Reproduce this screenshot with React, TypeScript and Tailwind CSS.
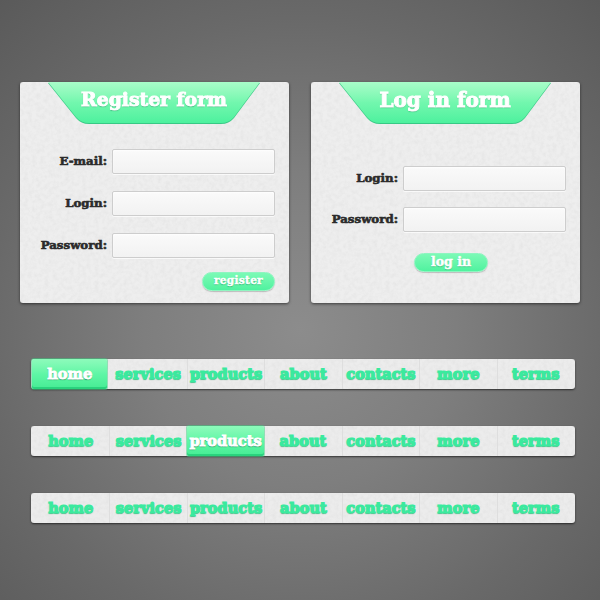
import React from "react";

const font = "[font-family:'DejaVu_Serif',serif] font-bold";

function Texture() {
  return (
    <svg className="absolute inset-0 w-full h-full pointer-events-none" aria-hidden="true">
      <filter id="grain" x="0" y="0" width="100%" height="100%">
        <feTurbulence type="fractalNoise" baseFrequency="0.24" numOctaves="3" seed="4" />
        <feColorMatrix type="matrix" values="0 0 0 0 0.6  0 0 0 0 0.6  0 0 0 0 0.6  1 0 0 0 -0.36" />
      </filter>
      <rect width="100%" height="100%" filter="url(#grain)" opacity="0.42" />
    </svg>
  );
}

function Field({ label }: { label: string }) {
  return (
    <div className="flex items-center justify-end">
      <span className={`${font} mr-[5px] text-[11.8px] leading-none text-[#2b2b2b] [-webkit-text-stroke:0.6px_#2b2b2b]`}>{label}</span>
      <input
        aria-label={label}
        className="h-[25px] w-[163px] rounded-[2px] border border-[#cdcdcd] bg-gradient-to-b from-[#fafafa] to-[#f2f2f2] shadow-[inset_0_1px_2px_rgba(255,255,255,0.9),0_1px_0_rgba(255,255,255,0.7)]"
      />
    </div>
  );
}

function Card({ title, titleSize, titlePad, children }: { title: string; titleSize: string; titlePad: string; children: React.ReactNode }) {
  return (
    <div className="relative h-[221px] w-[269px] rounded-[3px] bg-[#eeeeee] shadow-[0_1px_3px_rgba(0,0,0,0.55)]">
      <Texture />
      <div className="absolute left-[28px] top-0 [filter:drop-shadow(0_1px_0_#38c985)]">
        <div className={`flex h-[41px] w-[212px] justify-center bg-gradient-to-b from-[#a8fcc9] via-[#72f7ae] to-[#4cf19e] ${titlePad} [clip-path:path('M0_0L212_0L186_35Q181_41_173_41L41_41Q33_41_28_35Z')]`}>
          <span className={`${font} ${titleSize} leading-[29px] text-white [-webkit-text-stroke:1px_#fff] [text-shadow:0_1px_1px_rgba(40,150,100,0.8)]`}>{title}</span>
        </div>
      </div>
      <div className="relative h-full">{children}</div>
    </div>
  );
}

function Pill({ text, className }: { text: string; className: string }) {
  return (
    <div className={`flex items-center justify-center rounded-full border border-[#8ef5c0] bg-gradient-to-b from-[#7bfab6] to-[#4ff29f] text-white shadow-[0_1px_1px_rgba(0,0,0,0.2)] [text-shadow:0_1px_1px_rgba(30,140,90,0.6)] ${font} ${className}`}>
      {text}
    </div>
  );
}

const items = ["home", "services", "products", "about", "contacts", "more", "terms"];

function Nav({ active }: { active?: number }) {
  return (
    <div className="relative grid h-[30px] w-[544px] grid-cols-7 rounded-[3px] bg-[#ececec] px-[1px] shadow-[0_1px_2px_rgba(0,0,0,0.6)]">
      <Texture />
      {items.map((t, i) => {
        const on = i === active;
        return (
          <div
            key={t}
            className={`relative flex h-full items-center justify-center ${font} whitespace-nowrap text-[14.6px] leading-none ${
              on && i === 0 ? "mr-[2px]" : ""
            } ${
              i > 0 && !on && i !== (active ?? -9) + 1 ? "border-l border-[#dedede]" : ""
            } ${
              on
                ? "rounded-[2px] bg-gradient-to-b from-[#8dfbbb] via-[#5ff6a6] to-[#45ec94] text-white shadow-[inset_0_-2px_0_rgba(30,200,115,0.7),0_0_0_1px_rgba(60,210,130,0.5)] [-webkit-text-stroke:0.9px_#fff] [text-shadow:0_1px_1px_rgba(20,110,70,0.9)]"
                : "text-[#3aea9e] [-webkit-text-stroke:1.2px_#3aea9e] [text-shadow:0_1px_1px_rgba(20,110,70,0.65)]"
            }`}
          >
            {t}
          </div>
        );
      })}
    </div>
  );
}

export default function App() {
  return (
    <div className="flex h-[600px] w-[600px] flex-col overflow-hidden bg-[radial-gradient(circle_at_50%_55%,#8c8c8c_0%,#7e7e7e_35%,#696969_70%,#5a5a5a_100%)] pl-[20px] pt-[82px]">
      <div className="flex gap-[22px]">
        <Card title="Register form" titleSize="text-[18.8px]" titlePad="pt-[3px]">
          <div className="flex flex-col gap-[17px] pr-[14px] pt-[67px]">
            <Field label="E-mail:" />
            <Field label="Login:" />
            <Field label="Password:" />
          </div>
          <div className="mt-[14px] flex justify-end pr-[14px]">
            <Pill text="register" className="h-[19px] w-[73px] pb-[2px] text-[10.5px] tracking-[0.3px] [-webkit-text-stroke:0.4px_#fff]" />
          </div>
        </Card>
        <Card title="Log in form" titleSize="text-[20px]" titlePad="pt-[4px]">
          <div className="flex flex-col gap-[16px] pr-[14px] pt-[84px]">
            <Field label="Login:" />
            <Field label="Password:" />
          </div>
          <div className="mt-[21px] flex justify-center pl-[11px]">
            <Pill text="log in" className="h-[19px] w-[74px] text-[12.5px] [-webkit-text-stroke:0.5px_#fff]" />
          </div>
        </Card>
      </div>
      <div className="ml-[11px] mt-[56px] flex flex-col gap-[37px]">
        <Nav active={0} />
        <Nav active={2} />
        <Nav />
      </div>
    </div>
  );
}
